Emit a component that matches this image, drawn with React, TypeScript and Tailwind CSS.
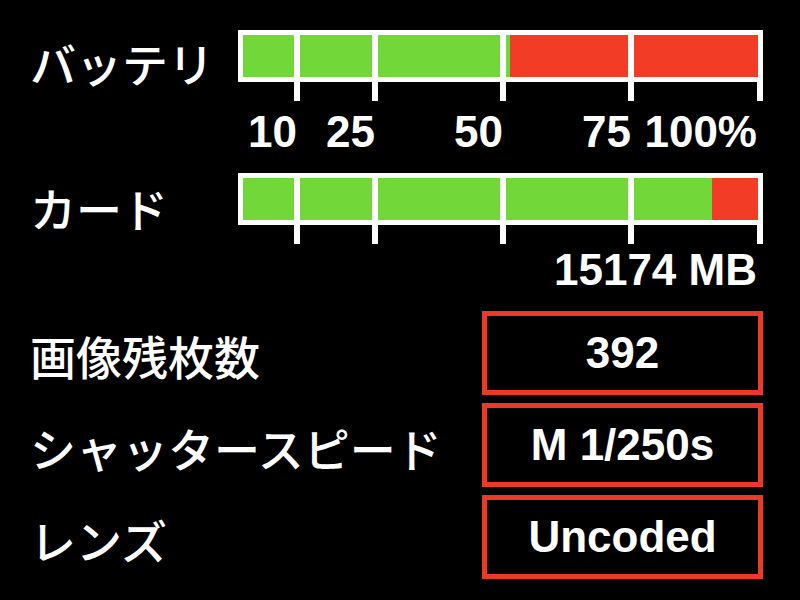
const jp = { fontFamily: '"Noto Sans CJK JP", "Noto Sans", sans-serif' }
const num = { fontFamily: '"Liberation Sans", Arial, sans-serif' }

// segment widths (content + 6px divider), shared by bars and tick rows
const segs = ['w-[57px]', 'w-[78px]', 'w-[128px]', 'w-[128px]']

function Bar({ fill }: { fill: string }) {
  return (
    <div className="w-[525px]">
      <div className="h-[52px] border-[5px] border-white">
        <div className={`flex h-full ${fill}`}>
          {segs.map((w, i) => (
            <div key={i} className={`${w} h-full border-r-[6px] border-white`} />
          ))}
          <div className="flex-1" />
        </div>
      </div>
      <div className="flex">
        <div className="w-[62px] h-[19px] border-r-[6px] border-white" />
        <div className="w-[78px] h-[19px] border-r-[6px] border-white" />
        <div className="w-[128px] h-[19px] border-r-[6px] border-white" />
        <div className="w-[128px] h-[19px] border-r-[6px] border-white" />
        <div className="w-[129px] h-[19px] border-r-[6px] border-white" />
      </div>
    </div>
  )
}

function Label({ children, className = '' }: { children: string; className?: string }) {
  return (
    <div className={`text-[46px] leading-none font-medium text-white whitespace-nowrap ${className}`} style={jp}>
      {children}
    </div>
  )
}

function ValueBox({ label, value }: { label: string; value: string }) {
  return (
    <div className="flex items-center justify-between h-[84px]">
      <Label className="mt-[4px]">{label}</Label>
      <div
        className="w-[281px] h-full border-[5px] border-[#ec3a26] flex items-center justify-center text-[44px] leading-none font-bold text-white"
        style={num}
      >
        {value}
      </div>
    </div>
  )
}

export default function App() {
  return (
    <div className="w-[800px] h-[600px] bg-black pl-[30px] pt-[30px] overflow-hidden">
      <div className="w-[733px]">
        <div className="flex justify-between">
          <Label className="mt-[9px]">バッテリ</Label>
          <div>
            <Bar fill="bg-[linear-gradient(to_right,#72d83a_51.8%,#f23c26_51.8%)]" />
            <div className="flex mt-[9px] text-[44px] leading-none font-bold text-white" style={num}>
              <div className="w-[59px] text-right">10</div>
              <div className="w-[78px] text-right">25</div>
              <div className="w-[128px] text-right">50</div>
              <div className="w-[128px] text-right">75</div>
              <div className="w-[126px] text-right">100%</div>
            </div>
          </div>
        </div>

        <div className="flex justify-between mt-[19px]">
          <Label className="mt-[11px]">カード</Label>
          <div>
            <Bar fill="bg-[linear-gradient(to_right,#72d83a_91.1%,#f23c26_91.1%)]" />
            <div className="mt-[4px] pr-[6px] text-right text-[44px] leading-none font-bold text-white" style={num}>
              15174 MB
            </div>
          </div>
        </div>

        <div className="mt-[19px] flex flex-col gap-[8px]">
          <ValueBox label="画像残枚数" value="392" />
          <ValueBox label="シャッタースピード" value="M 1/250s" />
          <ValueBox label="レンズ" value="Uncoded" />
        </div>
      </div>
    </div>
  )
}
